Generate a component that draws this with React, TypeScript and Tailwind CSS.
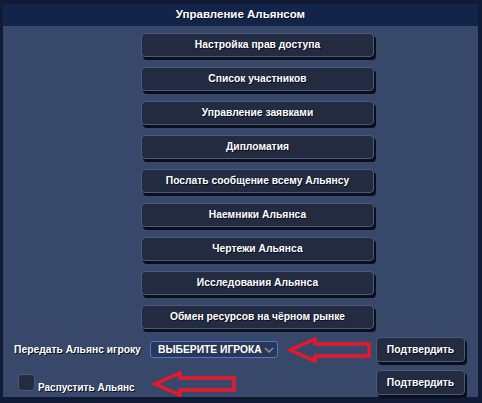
import React from "react";

const items = [
  "Настройка прав доступа",
  "Список участников",
  "Управление заявками",
  "Дипломатия",
  "Послать сообщение всему Альянсу",
  "Наемники Альянса",
  "Чертежи Альянса",
  "Исследования Альянса",
  "Обмен ресурсов на чёрном рынке",
];

function Arrow() {
  return (
    <svg width="84" height="26" viewBox="0 0 84 26" className="block shrink-0">
      <polygon
        points="3,13 28,2 28,7 82,7 82,19 28,19 28,24"
        fill="none"
        stroke="#e8182a"
        strokeWidth="3.5"
        strokeLinejoin="miter"
      />
    </svg>
  );
}

function Btn({ children, className = "" }: { children: React.ReactNode; className?: string }) {
  return (
    <div
      className={
        "flex shrink-0 items-center justify-center whitespace-nowrap rounded-[4px] border border-[#4a5a7e] bg-[#232b40] text-[10.3px] font-bold text-white shadow-[2px_3px_0_#0b0f1a] [text-shadow:1px_1px_0_#0a0f1c] " +
        className
      }
    >
      {children}
    </div>
  );
}

export default function App() {
  return (
    <div
      className="flex h-[403px] w-[482px] flex-col bg-[#111b36] pt-[4px] pb-[6px] pl-[3px] pr-[4px]"
      style={{ fontFamily: "'Liberation Sans', Arial, sans-serif" }}
    >
      <div className="flex h-[22px] shrink-0 items-center justify-center bg-[#13244a] text-[11.5px] font-bold text-white [text-shadow:1px_1px_0_#0a0f1c]">
        Управление Альянсом
      </div>
      <div className="flex flex-1 flex-col bg-[#38486a] pt-[7px]">
        <div className="flex flex-col gap-[10px] pl-[138px]">
          {items.map((t) => (
            <Btn key={t} className="h-[24px] w-[233px]">
              {t}
            </Btn>
          ))}
        </div>
        <div className="mt-[8px] flex h-[25px] items-center">
          <div className="w-[147px] shrink-0 whitespace-nowrap pl-[11px] text-[10.3px] font-bold text-white [text-shadow:1px_1px_0_#0a0f1c]">
            Передать Альянс игроку
          </div>
          <div className="flex h-[17px] w-[128px] shrink-0 items-center justify-between whitespace-nowrap rounded-[3px] border border-[#4b7bd0] bg-[#2a3757] pl-[7px] pr-[3px] text-[10.3px] font-bold text-white">
            <span>ВЫБЕРИТЕ ИГРОКА</span>
            <svg width="10" height="8" viewBox="0 0 10 8">
              <polyline points="1,2 5,6 9,2" fill="none" stroke="#8a93a8" strokeWidth="1.5" />
            </svg>
          </div>
          <div className="ml-[9px] shrink-0">
            <Arrow />
          </div>
          <Btn className="ml-[5px] h-[25px] w-[89px]">Подтвердить</Btn>
        </div>
        <div className="mt-[8px] flex h-[25px] items-center">
          <div className="ml-[15px] h-[17px] w-[17px] shrink-0 rounded-[4px] border border-[#4a5a7e] bg-[#232b40]" />
          <div className="ml-[3px] mt-[10px] w-[114px] shrink-0 whitespace-nowrap text-[10px] font-bold text-white [text-shadow:1px_1px_0_#0a0f1c]">
            Распустить Альянс
          </div>
          <div className="mt-[3px] shrink-0">
            <Arrow />
          </div>
          <Btn className="ml-[140px] h-[25px] w-[89px]">Подтвердить</Btn>
        </div>
      </div>
    </div>
  );
}
